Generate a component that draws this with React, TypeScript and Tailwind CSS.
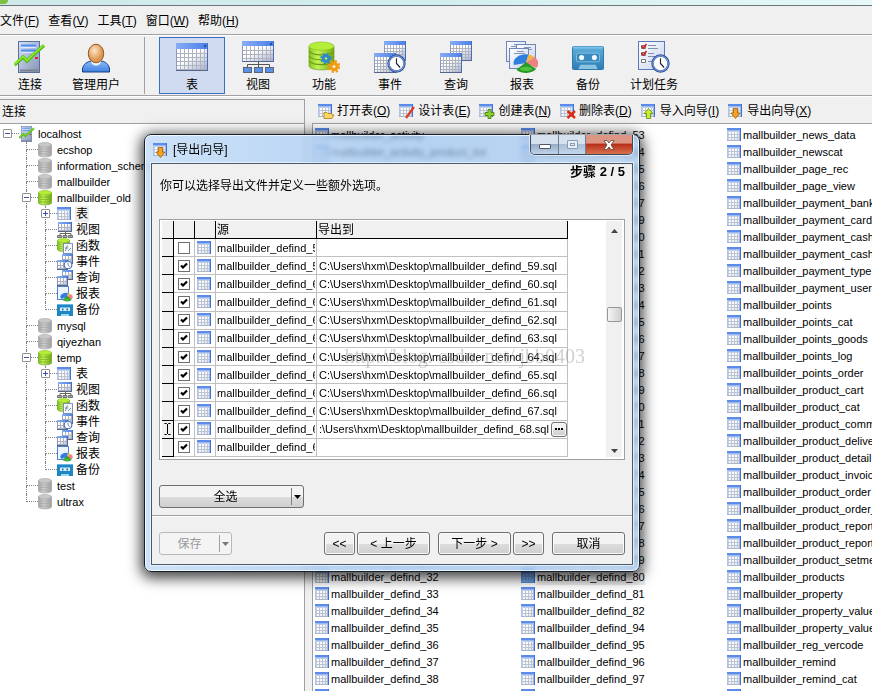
import type { ReactNode } from "react";
import { clsx } from "clsx";

const FONT = "font-['Liberation_Sans','Noto_Sans_CJK_SC',sans-serif]";

/* ---------- icon parts ---------- */

interface BoxProps {
    x: number;
    y: number;
    w: number;
    h: number;
}

function MiniTable({ x, y, w, h, head = 3, step = 3 }: BoxProps & { head?: number; step?: number }) {
    const lines = [];
    for (let cx = x + step; cx < x + w - 1; cx += step) lines.push(`M${cx + 0.5} ${y + head}V${y + h - 1}`);
    for (let cy = y + head + step; cy < y + h - 1; cy += step) lines.push(`M${x + 1} ${cy + 0.5}H${x + w - 1}`);
    return (
        <g>
            <rect x={x} y={y} width={w} height={h} fill="#8798c8" />
            <rect x={x + 1} y={y + head} width={w - 2} height={h - head - 1} fill="url(#cells)" />
            <path d={lines.join("")} stroke="#aeb3bd" strokeWidth="1" />
            <rect x={x} y={y} width={w} height={head} fill="url(#head)" />
            <path d={`M${x + w - 0.5} ${y}V${y + h}`} stroke="#4a6cb4" />
            <path d={`M${x} ${y + h - 0.5}H${x + w}`} stroke="#56658c" />
        </g>
    );
}

function Clock({ cx, cy, r }: { cx: number; cy: number; r: number }) {
    return (
        <g>
            <circle cx={cx} cy={cy} r={r} fill="#fff" stroke="#2b4fa0" strokeWidth={r / 3.4} />
            <circle cx={cx} cy={cy} r={r - 0.3} fill="none" stroke="#a9c2ee" strokeWidth={r / 10} />
            <path d={`M${cx} ${cy - r * 0.65}V${cy}L${cx + r * 0.45} ${cy + r * 0.5}`} stroke="#1c2333" strokeWidth={r / 7} fill="none" />
        </g>
    );
}

function Gear({ cx, cy, r, color, hole }: { cx: number; cy: number; r: number; color: string; hole: string }) {
    return (
        <g>
            <circle cx={cx} cy={cy} r={r} fill="none" stroke={color} strokeWidth={r * 0.5} strokeDasharray={`${r * 0.42} ${r * 0.365}`} />
            <circle cx={cx} cy={cy} r={r * 0.6} fill={hole} stroke={color} strokeWidth={r * 0.6} />
        </g>
    );
}

function Drum({ x, y, w, h, gray }: BoxProps & { gray?: boolean }) {
    const ry = w / 6;
    const ring = (t: number) =>
        `M${x} ${y + ry + t}C${x + w * 0.15} ${y + ry * 2.2 + t} ${x + w * 0.85} ${y + ry * 2.2 + t} ${x + w} ${y + ry + t}`;
    const gap = (h - ry * 2) / 4;
    return (
        <g>
            <path
                d={`M${x} ${y + ry}V${y + h - ry}C${x} ${y + h + ry * 0.3} ${x + w} ${y + h + ry * 0.3} ${x + w} ${y + h - ry}V${y + ry}Z`}
                fill={gray ? "url(#drumGray)" : "url(#drumGreen)"}
                stroke={gray ? "#9a9a9a" : "#5f9413"}
                strokeWidth="0.6"
            />
            <path d={ring(gap) + ring(gap * 2) + ring(gap * 3)} fill="none" stroke={gray ? "#9d9d9d" : "#6a9f10"} strokeWidth={w / 22} />
            <ellipse cx={x + w / 2} cy={y + ry} rx={w / 2} ry={ry} fill={gray ? "#c9c9c9" : "#b3ee38"} stroke={gray ? "#a3a3a3" : "#86c01c"} strokeWidth="0.6" />
        </g>
    );
}

function Pie({ cx, cy, r }: { cx: number; cy: number; r: number }) {
    const ry = r * 0.7;
    return (
        <g>
            <path d={`M${cx} ${cy}L${cx - r} ${cy + 2}A${r} ${ry} 0 0 1 ${cx + r * 0.2} ${cy - ry}Z`} fill="#2f7fe0" />
            <path d={`M${cx} ${cy}L${cx + r * 0.2} ${cy - ry}A${r} ${ry} 0 0 1 ${cx + r * 0.7} ${cy - ry * 0.7}Z`} fill="#f2b63c" />
            <path d={`M${cx} ${cy}L${cx + r * 0.7} ${cy - ry * 0.7}A${r} ${ry} 0 0 1 ${cx + r * 0.85} ${cy + ry * 0.6}Z`} fill="#ee8181" />
            <path d={`M${cx} ${cy - 1}L${cx + r * 0.85} ${cy + ry * 0.7}A${r} ${ry} 0 0 1 ${cx - r * 0.8} ${cy + ry * 0.8}Z`} fill="#2c9a26" />
            <ellipse cx={cx} cy={cy + ry * 0.7} rx={r * 0.5} ry={ry * 0.25} fill="#52c53f" />
        </g>
    );
}

function Sheet({ x, y, w, h }: BoxProps) {
    return (
        <g>
            <rect x={x + 0.5} y={y + 0.5} width={w - 1} height={h - 1} fill="url(#sheet)" stroke="#6f86b5" />
            <path d={`M${x + w * 0.4} ${y + 3.5}h${w * 0.35}M${x + w * 0.25} ${y + 5.5}h${w * 0.55}`} stroke="#7f94be" />
        </g>
    );
}

function Cassette({ x, y, w, h }: BoxProps) {
    return (
        <g>
            <rect x={x + 0.5} y={y + 0.5} width={w - 1} height={h - 1} rx="1" fill="url(#cassette)" stroke="#2f78ae" />
            <path d={`M${x + 1} ${y + 1.5}H${x + w - 1}`} stroke="#7fc4e8" strokeWidth="2" />
            <rect x={x + w * 0.14} y={y + h * 0.3} width={w * 0.72} height={h * 0.36} rx="1" fill="#3b8abf" stroke="#9ad0ec" strokeWidth="0.7" />
            <circle cx={x + w * 0.3} cy={y + h * 0.48} r={w * 0.08} fill="#f2fafe" />
            <circle cx={x + w * 0.7} cy={y + h * 0.48} r={w * 0.08} fill="#f2fafe" />
            <path d={`M${x + w * 0.2} ${y + h - 1}l${w * 0.06} ${-h * 0.18}h${w * 0.48}l${w * 0.06} ${h * 0.18}z`} fill="#8bc3e2" />
        </g>
    );
}

function Server({ small }: { small?: boolean }) {
    return (
        <svg viewBox="0 0 32 32" className={small ? "size-4" : "size-8"}>
            <rect x="4.5" y="0.5" width="21" height="31" fill="url(#server)" stroke="#5c6f9c" />
            <path d="M7 4.5H22M7 9.5H22" stroke="#4f8ff0" strokeWidth="2" />
            <path d="M7 6.5H22M7 11.5H22" stroke="#dfe9fb" />
            <path d="M21 17h3" stroke="#e32222" strokeWidth="2" />
            <path d="M6 29.5H24" stroke="#7b8090" strokeWidth="2" />
            <path d="M0.5 24L9 16L13 20L18 15L30 4.5" fill="none" stroke="#54b513" strokeWidth={small ? 4 : 3.4} />
            <path d="M0.5 23.5L9 15.5L13 19.5L18 14.5L30 4" fill="none" stroke="#8cf02a" strokeWidth="1.6" />
        </svg>
    );
}

type IconName = "server" | "user" | "table" | "view" | "function" | "event" | "query" | "report" | "backup" | "schedule";

function BigIcon({ name }: { name: IconName }) {
    if (name === "server") return <Server />;
    return (
        <svg viewBox="0 0 32 32" className="size-8">
            {name === "user" && (
                <g>
                    <path d="M2.5 31V28C3 23 8 20.5 11 20H21C25 20.5 29 23 29.5 28V31Z" fill="url(#shirt)" stroke="#12407f" />
                    <path d="M11 20.5C12 26 20 26 21 20.5L19 18H13Z" fill="#f1f7ff" />
                    <ellipse cx="16" cy="12.5" rx="7.7" ry="9.3" fill="url(#face)" stroke="#93541c" />
                </g>
            )}
            {name === "table" && (
                <g>
                    <MiniTable x={0} y={2} w={32} h={28} head={6} step={4} />
                    <rect x="28" y="4" width="2" height="2" fill="#1c4da8" />
                </g>
            )}
            {name === "view" && (
                <g>
                    <MiniTable x={0} y={0} w={32} h={21} head={5} step={4} />
                    <rect x="28" y="2" width="2" height="2" fill="#1c4da8" />
                    <path d="M16.5 21V26M5.5 26V23.5H27.5V26" stroke="#555" fill="none" />
                    {[1, 12, 23].map((x) => (
                        <rect key={x} x={x + 0.5} y="26.5" width="8" height="5" fill="#5b92e8" stroke="#5a6477" />
                    ))}
                </g>
            )}
            {name === "function" && (
                <g>
                    <Drum x={1} y={1} w={25} h={28} />
                    <Gear cx={18} cy={17.5} r={4.5} color="#2d87cf" hole="#b9e94c" />
                    <Gear cx={26} cy={25.5} r={5.2} color="#f39a13" hole="#eef0e8" />
                </g>
            )}
            {(name === "event" || name === "query") && (
                <g>
                    <MiniTable x={10} y={0} w={22} h={20} head={4} step={3} />
                    <MiniTable x={0} y={12} w={22} h={20} head={4} step={3} />
                    {name === "event" && <Clock cx={22.5} cy={22.5} r={8} />}
                </g>
            )}
            {name === "report" && (
                <g>
                    <Sheet x={0} y={0} w={20} h={21} />
                    <Sheet x={10} y={3} w={20} h={21} />
                    <Sheet x={3} y={7} w={20} h={21} />
                    <Pie cx={20} cy={22} r={12} />
                </g>
            )}
            {name === "backup" && <Cassette x={0} y={5} w={32} h={24} />}
            {name === "schedule" && (
                <g>
                    <rect x="0.5" y="0.5" width="26" height="28" fill="url(#sheet)" stroke="#5a7ab8" />
                    <path d="M10 4.5H18M10 7.5H20M10 12.5H16M10 15.5H18M10 20.5H14" stroke="#8390ab" />
                    <path d="M3.5 4.5h4v3h-4zM3.5 11.5h4v3h-4zM3.5 18.5h4v3h-4z" stroke="#777" fill="#fff" />
                    <path d="M3.5 5l2 2l3-4M3.5 12l2 2l3-4" stroke="#d31b1b" strokeWidth="1.6" fill="none" />
                    <Clock cx={22.5} cy={22.5} r={8} />
                </g>
            )}
        </svg>
    );
}

function SmallTable({ selected, children }: { selected?: boolean; children?: ReactNode }) {
    return (
        <svg viewBox="0 0 16 16" className="size-4 shrink-0">
            <rect x="0" y="1" width="14" height="13" fill="#c3cfe6" />
            <rect x="2" y="5" width="10" height="8" fill="url(#smallCells)" />
            <path d="M4.5 5V13M7.5 5V13M10.5 5V13M1 7.5H13M1 10.5H13" stroke="#bcc4d3" />
            <path d="M0 1H14V3H0Z" fill="#5c8bea" />
            <path d="M0 3.5H13" stroke="#9ab8f2" />
            <path d="M13.5 1V14" stroke="#3f72d8" />
            <path d="M12.5 4V14" stroke="#9db6e6" />
            <path d="M0.5 3V14" stroke="#b3c3e2" />
            <path d="M0 13.5H13" stroke="#aab6cc" />
            {selected && <rect x="0" y="0" width="14" height="14" fill="#2d7be0" fillOpacity="0.6" />}
            {children}
        </svg>
    );
}

function TreeIcon({ name }: { name: string }) {
    if (name === "server") return <Server small />;
    if (name === "table") return <SmallTable />;
    return (
        <svg viewBox="0 0 16 16" className="size-4 shrink-0">
            {name === "db" && <Drum x={0.5} y={0.5} w={13} h={14.5} gray />}
            {name === "dbOpen" && <Drum x={0.5} y={0.5} w={13} h={14.5} />}
            {name === "view" && (
                <g>
                    <MiniTable x={1} y={0} w={14} h={10} head={2} step={3} />
                    <path d="M8.5 10V13M3 13.5V11.5H14V13.5" stroke="#666" fill="none" />
                    <path d="M0.5 13.5h4v2h-4zM6 13.5h4v2h-4zM11.5 13.5h4v2h-4z" fill="#aaa" stroke="#707070" />
                </g>
            )}
            {name === "function" && (
                <g>
                    <Drum x={0.5} y={0.5} w={12} h={13} />
                    <rect x="6.5" y="5.5" width="9" height="10" fill="#f4f8ff" stroke="#8092ad" />
                    <path d="M8.5 13l1.5-5h1M8 10h3.5M11 13l3-3" stroke="#8390a4" fill="none" />
                </g>
            )}
            {(name === "event" || name === "query") && (
                <g>
                    <MiniTable x={5} y={0} w={11} h={10} head={2} step={3} />
                    <MiniTable x={0} y={6} w={11} h={10} head={2} step={3} />
                    {name === "event" && <Clock cx={11} cy={11} r={3.8} />}
                </g>
            )}
            {name === "report" && (
                <g>
                    <rect x="0.5" y="0.5" width="11" height="13" fill="#eef4ff" stroke="#4f82d8" />
                    <Pie cx={10} cy={11} r={5.5} />
                </g>
            )}
            {name === "backup" && (
                <g>
                    <rect x="0" y="2" width="16" height="12" fill="#1f86c4" />
                    <path d="M0 2.5H16" stroke="#67b7e4" />
                    <path d="M3 5.5H13V9H3Z" fill="#d9f0fb" />
                    <path d="M5 7.5h1.5M9.5 7.5h1.5" stroke="#1a6ea6" strokeWidth="2" />
                    <path d="M4 14V12H12V14" fill="#a4d4ee" />
                </g>
            )}
        </svg>
    );
}

function ActionIcon({ name }: { name: string }) {
    return (
        <SmallTable>
            {name === "open" && <path d="M6 15.5V9.5H9L10 10.5H14V12H16L14 15.5Z" fill="#fbd46a" stroke="#b07d14" strokeWidth="0.8" />}
            {name === "design" && <path d="M7 15L15 4" stroke="#e23b1d" strokeWidth="2.2" />}
            {name === "create" && <path d="M9 6.5h3v3h3v3h-3v3h-3v-3h-3v-3h3z" fill="#8ed12c" stroke="#4c8414" strokeWidth="0.9" />}
            {name === "delete" && <path d="M7.5 8L15 15M15 8L7.5 15" stroke="#dd2a12" strokeWidth="2.4" />}
            {name === "import" && <path d="M7.5 5.5L12 10.5H9.5V15.5H5.5V10.5H3Z" fill="#c6ef2a" stroke="#5f8a10" strokeWidth="0.8" />}
            {name === "export" && <path d="M5.5 5.5H9.5V10H12L7.5 15.5L3 10H5.5Z" fill="#f7a21c" stroke="#a25c0a" strokeWidth="0.8" />}
        </SmallTable>
    );
}

function Gradients() {
    return (
        <svg className="absolute size-0" aria-hidden="true">
            <defs>
                <linearGradient id="cells" x1="0" y1="0" x2="1" y2="1">
                    <stop offset="0.4" stopColor="#fff" />
                    <stop offset="1" stopColor="#a5b2d0" />
                </linearGradient>
                <linearGradient id="smallCells" x1="0" y1="0" x2="1" y2="1">
                    <stop offset="0.3" stopColor="#fff" />
                    <stop offset="1" stopColor="#dde1ea" />
                </linearGradient>
                <linearGradient id="head" x1="0" x2="1">
                    <stop offset="0" stopColor="#86aef5" />
                    <stop offset="1" stopColor="#4a7fe6" />
                </linearGradient>
                <linearGradient id="server" x1="0" x2="1" y2="1">
                    <stop offset="0" stopColor="#d5e1f7" />
                    <stop offset="1" stopColor="#8494b4" />
                </linearGradient>
                <linearGradient id="sheet" x1="0" x2="1" y2="1">
                    <stop offset="0" stopColor="#fff" />
                    <stop offset="1" stopColor="#c6d3ee" />
                </linearGradient>
                <linearGradient id="cassette" x2="0" y2="1">
                    <stop offset="0" stopColor="#5fb0dc" />
                    <stop offset="1" stopColor="#2c7cb4" />
                </linearGradient>
                <linearGradient id="shirt" x2="0" y2="1">
                    <stop offset="0" stopColor="#8dbcff" />
                    <stop offset="1" stopColor="#3d7fe0" />
                </linearGradient>
                <radialGradient id="face" cx="0.4" cy="0.35">
                    <stop offset="0" stopColor="#fde6cc" />
                    <stop offset="1" stopColor="#dd9650" />
                </radialGradient>
                <linearGradient id="drumGray">
                    <stop offset="0" stopColor="#a6a6a6" />
                    <stop offset="0.4" stopColor="#cfcfcf" />
                    <stop offset="1" stopColor="#a2a2a2" />
                </linearGradient>
                <linearGradient id="drumGreen">
                    <stop offset="0" stopColor="#86c41c" />
                    <stop offset="0.35" stopColor="#c3f25a" />
                    <stop offset="1" stopColor="#74aa14" />
                </linearGradient>
            </defs>
        </svg>
    );
}

/* ---------- menu and toolbar ---------- */

const menus = [
    ["文件", "F"],
    ["查看", "V"],
    ["工具", "T"],
    ["窗口", "W"],
    ["帮助", "H"],
];

const tools: { name: IconName; label: string }[] = [
    { name: "table", label: "表" },
    { name: "view", label: "视图" },
    { name: "function", label: "功能" },
    { name: "event", label: "事件" },
    { name: "query", label: "查询" },
    { name: "report", label: "报表" },
    { name: "backup", label: "备份" },
    { name: "schedule", label: "计划任务" },
];

const actions = [
    { name: "open", label: "打开表", hotkey: "O" },
    { name: "design", label: "设计表", hotkey: "E" },
    { name: "create", label: "创建表", hotkey: "N" },
    { name: "delete", label: "删除表", hotkey: "D" },
    { name: "import", label: "导入向导", hotkey: "I" },
    { name: "export", label: "导出向导", hotkey: "X" },
];

function Hotkey({ label, hotkey }: { label: string; hotkey: string }) {
    return (
        <span className="whitespace-nowrap">
            {label}(<span className="underline">{hotkey}</span>)
        </span>
    );
}

function ToolButton({ name, label, active }: { name: IconName; label: string; active?: boolean }) {
    return (
        <button
            className={clsx(
                "flex w-[66px] shrink-0 flex-col items-center gap-1 border pt-[3px] text-xs leading-4",
                active ? "border-[#3a6fc8] bg-[#d0dbf0]" : "border-transparent"
            )}
        >
            <BigIcon name={name} />
            {label}
        </button>
    );
}

/* ---------- connection tree ---------- */

interface TreeNode {
    label: string;
    icon: string;
    depth: number;
    sign?: string;
    last?: boolean;
    selected?: boolean;
}

const objectNodes = (selected: boolean): TreeNode[] => [
    { label: "表", icon: "table", depth: 2, sign: "+", selected },
    { label: "视图", icon: "view", depth: 2 },
    { label: "函数", icon: "function", depth: 2 },
    { label: "事件", icon: "event", depth: 2 },
    { label: "查询", icon: "query", depth: 2 },
    { label: "报表", icon: "report", depth: 2 },
    { label: "备份", icon: "backup", depth: 2, last: true },
];

const tree: TreeNode[] = [
    { label: "localhost", icon: "server", depth: 0, sign: "-", last: true },
    { label: "ecshop", icon: "db", depth: 1 },
    { label: "information_schema", icon: "db", depth: 1 },
    { label: "mallbuilder", icon: "db", depth: 1 },
    { label: "mallbuilder_old", icon: "dbOpen", depth: 1, sign: "-" },
    ...objectNodes(true),
    { label: "mysql", icon: "db", depth: 1 },
    { label: "qiyezhan", icon: "db", depth: 1 },
    { label: "temp", icon: "dbOpen", depth: 1, sign: "-" },
    ...objectNodes(false),
    { label: "test", icon: "db", depth: 1 },
    { label: "ultrax", icon: "db", depth: 1, last: true },
];

function TreeRow({ node }: { node: TreeNode }) {
    return (
        <li className="flex h-4 items-center">
            {node.depth > 0 && <span className="h-4 w-[19px] shrink-0" />}
            {node.depth > 1 && <span className="ml-[7px] h-4 w-3 shrink-0 border-l border-dotted border-[#808080]" />}
            <span className="relative h-4 w-[19px] shrink-0 pl-[7px]">
                <span className={clsx("block h-2 border-b border-dotted border-[#808080]", node.depth > 0 && "border-l")} />
                <span className={clsx("block h-2 border-dotted border-[#808080]", !node.last && "border-l")} />
                {node.sign && (
                    <button
                        aria-label={node.sign === "+" ? "展开" : "折叠"}
                        className="absolute top-[3px] left-[3px] flex size-[9px] items-center justify-center rounded-[1px] border border-[#919191] bg-white"
                    >
                        <span className="absolute h-px w-[5px] bg-[#3c54a8]" />
                        {node.sign === "+" && <span className="absolute h-[5px] w-px bg-[#3c54a8]" />}
                    </button>
                )}
            </span>
            <TreeIcon name={node.icon} />
            <span className={clsx("ml-[2px] px-px whitespace-nowrap", node.depth === 2 && "text-xs leading-4", node.selected && "bg-[#ececec]")}>
                {node.label}
            </span>
        </li>
    );
}

/* ---------- table list ---------- */

const range = (from: number, to: number) => Array.from({ length: to - from + 1 }, (_, i) => `defind_${from + i}`);

const columns = [
    ["activity", "activity_product_list", "admin", "admin_group", "album", "announcement", "article", "brand", ...range(14, 39)],
    [...range(53, 57), ...range(59, 82), ...range(94, 97), "delivery_address"],
    [
        "news_data",
        "newscat",
        "page_rec",
        "page_view",
        "payment_banks",
        "payment_card",
        "payment_cashflow",
        "payment_cashpickup",
        "payment_type",
        "payment_user",
        "points",
        "points_cat",
        "points_goods",
        "points_log",
        "points_order",
        "product_cart",
        "product_cat",
        "product_comment",
        "product_delivery",
        "product_detail",
        "product_invoice",
        "product_order",
        "product_order_pro",
        "product_report",
        "product_report_type",
        "product_setmeal",
        "products",
        "property",
        "property_value",
        "property_value_img",
        "reg_vercode",
        "remind",
        "remind_cat",
        "seo",
    ],
];

function TableList() {
    return (
        <div className="flex min-h-0 flex-1 overflow-hidden border-t border-l border-[#a0a0a0] bg-white pt-0.5 pl-0.5">
            {columns.map((names, i) => (
                <ul key={i} className="w-[206px] shrink-0">
                    {names.map((name) => (
                        <li key={name} className="flex h-[17px] items-center">
                            <SmallTable selected={name === "defind_80"} />
                            <span className={clsx("whitespace-nowrap", name === "defind_80" && "bg-[#ececec]")}>mallbuilder_{name}</span>
                        </li>
                    ))}
                </ul>
            ))}
        </div>
    );
}

/* ---------- export wizard ---------- */

const button =
    "rounded-[3px] border border-[#707070] bg-linear-to-b from-[#f3f3f3] from-50% via-[#dddddd] via-50% to-[#cfcfcf] text-xs leading-5 shadow-[inset_0_0_0_1px_#fafafa]";

function SplitButton({ label, disabled, className }: { label: string; disabled?: boolean; className: string }) {
    return (
        <div
            className={clsx(
                "flex h-[23px] items-center rounded-[3px] border text-xs",
                disabled ? "border-[#b5b9bd] bg-[#f4f4f4] text-[#9a9a9a]" : "border-[#707070] bg-linear-to-b from-[#f3f3f3] from-50% via-[#dddddd] via-50% to-[#cfcfcf]",
                className
            )}
        >
            <button disabled={disabled} className="h-full flex-1 leading-5">
                {label}
            </button>
            <button
                disabled={disabled}
                aria-label={label + "选项"}
                className={clsx("flex h-[17px] w-3 items-center justify-center border-l", disabled ? "border-[#a0a0a0]" : "border-[#808080]")}
            >
                <svg viewBox="0 0 7 4" className="h-1 w-[7px]">
                    <path d="M0 0H7L3.5 4Z" fill={disabled ? "#777" : "#000"} />
                </svg>
            </button>
        </div>
    );
}

const exportRows = Array.from({ length: 12 }, (_, i) => 58 + i);
const headCell = "border-r border-b border-black bg-[#f0f0f0] p-0 text-left font-normal";
const bodyCell = "border-r border-b border-[#c0c0c0] p-0";

function ExportTable() {
    return (
        <table className="w-[406px] table-fixed border-separate border-spacing-0 text-[11px] leading-4">
            <colgroup>
                <col className="w-3" />
                <col className="w-[21px]" />
                <col className="w-[21px]" />
                <col className="w-[101px]" />
                <col />
            </colgroup>
            <thead>
                <tr className="h-[18px]">
                    <th className={headCell} aria-label="当前行" />
                    <th className={headCell} aria-label="选择" />
                    <th className={headCell} aria-label="类型" />
                    <th className={clsx(headCell, "pl-px text-xs leading-4")}>源</th>
                    <th className={clsx(headCell, "pl-px text-xs leading-4")}>导出到</th>
                </tr>
            </thead>
            <tbody>
                {exportRows.map((n) => (
                    <tr key={n} className="h-[18px]">
                        <td className="border-r border-b border-black bg-[#f0f0f0] p-0">
                            {n === 68 && (
                                <svg viewBox="0 0 7 12" className="mx-auto h-3 w-[7px]">
                                    <path d="M0.5 0.5H2.5L3.5 1.5L4.5 0.5H6.5M0.5 11.5H2.5L3.5 10.5L4.5 11.5H6.5M3.5 1V11" fill="none" stroke="#000" />
                                </svg>
                            )}
                        </td>
                        <td className={bodyCell}>
                            <label className="relative mx-auto block size-3">
                                <input
                                    type="checkbox"
                                    aria-label={`mallbuilder_defind_${n}`}
                                    defaultChecked={n > 58}
                                    className="peer block size-3 appearance-none border border-[#707070] bg-white"
                                />
                                <svg viewBox="0 0 12 12" className="pointer-events-none absolute inset-0 hidden size-3 peer-checked:block">
                                    <path d="M3 5.5L5 7.5L9 3.5" fill="none" stroke="#000" strokeWidth="2.2" />
                                </svg>
                            </label>
                        </td>
                        <td className={bodyCell}>
                            <div className="flex justify-center">
                                <SmallTable />
                            </div>
                        </td>
                        <td className={clsx(bodyCell, "px-px")}>
                            <div className="overflow-hidden whitespace-nowrap">mallbuilder_defind_{n}</div>
                        </td>
                        <td className={clsx(bodyCell, "pl-0.5")}>
                            {n === 68 ? (
                                <div className="flex h-4 items-center">
                                    <input aria-label="导出到" defaultValue=":\Users\hxm\Desktop\mallbuilder_defind_68.sql" className="min-w-0 flex-1 outline-none" />
                                    <button aria-label="浏览" className={clsx(button, "flex h-[15px] w-4 items-center justify-center gap-px")}>
                                        <span className="size-0.5 bg-black" />
                                        <span className="size-0.5 bg-black" />
                                        <span className="size-0.5 bg-black" />
                                    </button>
                                </div>
                            ) : (
                                n > 58 && n < 69 && <span className="whitespace-nowrap">C:\Users\hxm\Desktop\mallbuilder_defind_{n}.sql</span>
                            )}
                        </td>
                    </tr>
                ))}
            </tbody>
        </table>
    );
}

function ScrollBar() {
    return (
        <div className="flex w-4 flex-col items-center bg-[#f0f0f0]">
            <svg viewBox="0 0 7 4" className="mt-2 h-1 w-[7px]">
                <path d="M0 4H7L3.5 0Z" fill="#444" />
            </svg>
            <div className="mt-[74px] h-[15px] w-[15px] rounded-[2px] border border-[#979797] bg-linear-to-r from-[#f5f5f5] to-[#cfcfcf]" />
            <svg viewBox="0 0 7 4" className="mt-auto mb-1 h-1 w-[7px]">
                <path d="M0 0H7L3.5 4Z" fill="#444" />
            </svg>
        </div>
    );
}

function ExportWizard() {
    return (
        <div
            role="dialog"
            aria-label="[导出向导]"
            className="absolute top-[134px] left-[144px] w-[496px] rounded-[7px] border border-[#15202e] bg-linear-to-r from-[#c8dff8]/90 via-[#93bdec]/70 to-[#9fc3ea]/70 px-[6px] pb-[6px] shadow-[0_3px_14px_3px_rgba(0,0,0,0.75),inset_0_0_0_1px_rgba(255,255,255,0.75)] backdrop-blur-[2px]"
        >
            <div className="flex h-7 items-start pl-0.5">
                <div className="flex flex-1 items-center gap-1 pt-[6px]">
                    <ActionIcon name="export" />
                    <h1 className="text-xs leading-[18px]">[导出向导]</h1>
                </div>
                <div className="flex h-5 overflow-hidden rounded-b-[5px] border border-t-0 border-[#3c4a5c] shadow-[0_0_0_1px_rgba(255,255,255,0.6)]">
                    <button aria-label="最小化" className="flex w-7 items-center justify-center border-r border-[#6c7d92] bg-linear-to-b from-[#d5e1ee] from-45% via-[#98adc6] via-50% to-[#bfd3e8]">
                        <span className="mt-1 h-[5px] w-3 rounded-[1px] border border-[#4d5768] bg-white" />
                    </button>
                    <button aria-label="最大化" className="flex w-[27px] items-center justify-center border-r border-[#6c7d92] bg-linear-to-b from-[#d5e1ee] from-45% via-[#a9bfd8] via-50% to-[#c4d8ec]">
                        <span className="flex h-[9px] w-[11px] items-center justify-center rounded-[1px] border border-[#8b9bb0] bg-[#e6eef7]">
                            <span className="h-[3px] w-[5px] border border-[#8b9bb0]" />
                        </span>
                    </button>
                    <button aria-label="关闭" className="flex w-[46px] items-center justify-center bg-linear-to-b from-[#dd9584] from-40% via-[#b9301a] via-50% to-[#d9704e]">
                        <svg viewBox="0 0 12 10" className="h-[10px] w-3">
                            <path d="M1 0.5H4L6 3L8 0.5H11L8 5L11 9.5H8L6 7L4 9.5H1L4 5Z" fill="#fff" stroke="#5a4648" strokeWidth="0.8" />
                        </svg>
                    </button>
                </div>
            </div>
            <div className="border border-[#4b5a6b] bg-[#f0f0f0] shadow-[0_0_0_1px_rgba(255,255,255,0.6)]">
                <div className="px-[7px]">
                    <p className="text-right text-[13px] leading-4 font-bold">步骤 2 / 5</p>
                    <p className="pl-px text-xs leading-3">你可以选择导出文件并定义一些额外选项。</p>
                    <div className="relative mt-[27px] flex h-[241px] justify-between border border-[#a0a0a0] bg-white p-0.5 pt-px">
                        <ExportTable />
                        <ScrollBar />
                        <span className="pointer-events-none absolute top-[122px] right-[39px] font-['Liberation_Serif',serif] text-xl leading-7 whitespace-nowrap text-[#8a8a8a]/40">
                            http://blog. csdn. net/ jbb0403
                        </span>
                    </div>
                    <SplitButton label="全选" className="mt-[25px] w-[145px]" />
                </div>
                <div className="mt-[7px] flex justify-between border-t border-[#a0a0a0] px-[7px] pt-4 pb-[9px] shadow-[inset_0_1px_0_#fff]">
                    <SplitButton label="保存" disabled className="w-[73px]" />
                    <div className="flex gap-2">
                        <div className="flex gap-0.5">
                            <button className={clsx(button, "h-[23px] w-[31px]")}>&lt;&lt;</button>
                            <button className={clsx(button, "h-[23px] w-[73px]")}>&lt; 上一步</button>
                        </div>
                        <div className="flex gap-0.5">
                            <button className={clsx(button, "h-[23px] w-[73px]")}>下一步 &gt;</button>
                            <button className={clsx(button, "h-[23px] w-[31px]")}>&gt;&gt;</button>
                        </div>
                        <button className={clsx(button, "h-[23px] w-[73px]")}>取消</button>
                    </div>
                </div>
            </div>
        </div>
    );
}

export default function App() {
    return (
        <div className={clsx("relative flex h-screen flex-col overflow-hidden bg-[#f0f0f0] text-[11px] leading-4 text-black", FONT)}>
            <Gradients />
            <div className="flex h-[6px] shrink-0 border-b border-[#6c7778] bg-linear-to-r from-[#cfe9ea] via-[#d3eeef] to-[#e6f8f8]">
                <span className="h-1 w-2 rounded-br-full bg-[#7cc242]" />
            </div>
            <nav className="flex h-[29px] shrink-0 items-center gap-[9px] border-b border-[#a0a0a0] pt-px text-xs">
                {menus.map(([label, hotkey]) => (
                    <button key={hotkey}>
                        <Hotkey label={label} hotkey={hotkey} />
                    </button>
                ))}
            </nav>
            <div className="flex h-[61px] shrink-0 border-t border-b border-t-white border-b-[#a0a0a0] py-px">
                <div className="flex pr-[15px]">
                    <div className="-ml-[3px] flex">
                        <ToolButton name="server" label="连接" />
                        <ToolButton name="user" label="管理用户" />
                    </div>
                </div>
                <div className="mr-[14px] w-px bg-[#a0a0a0]" />
                {tools.map((tool) => (
                    <ToolButton key={tool.name} {...tool} active={tool.name === "table"} />
                ))}
            </div>
            <main className="flex min-h-0 flex-1 border-t border-white">
                <aside className="mt-0.5 flex w-[305px] shrink-0 flex-col border-t border-r border-[#a0a0a0]">
                    <h2 className="flex h-6 items-center border-b border-[#a0a0a0] pl-0.5 text-xs">连接</h2>
                    <ul className="flex-1 overflow-hidden bg-white pt-0.5">
                        {tree.map((node, i) => (
                            <TreeRow key={i} node={node} />
                        ))}
                    </ul>
                </aside>
                <section className="ml-[7px] flex min-w-0 flex-1 flex-col">
                    <div className="flex h-[26px] items-center gap-[9px] pt-px pl-[6px] text-xs">
                        {actions.map(({ name, label, hotkey }) => (
                            <button key={name} className="flex items-center gap-[3px]">
                                <ActionIcon name={name} />
                                <Hotkey label={label} hotkey={hotkey} />
                            </button>
                        ))}
                    </div>
                    <TableList />
                </section>
            </main>
            <ExportWizard />
        </div>
    );
}
